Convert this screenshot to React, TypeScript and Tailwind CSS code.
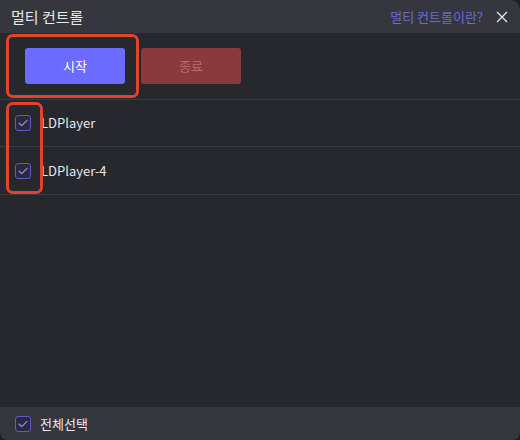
import React from "react";

const Check = ({ size = 16 }: { size?: number }) => (
  <div
    className="flex items-center justify-center rounded-[3px] border border-[#5b5bd0] bg-[#2a2a3a]"
    style={{ width: size, height: size }}
  >
    <svg width="10" height="8" viewBox="0 0 10 8" fill="none">
      <path d="M1 4.2 L3.8 6.6 L9 1.4" stroke="#8a8af0" strokeWidth="1.3" strokeLinecap="round" strokeLinejoin="round" />
    </svg>
  </div>
);

export default function App() {
  const font = { fontFamily: '"Noto Sans CJK KR", "Noto Sans", sans-serif' };
  return (
    <div className="w-[520px] h-[440px] bg-[#1f1f24]" style={font}>
      <div className="relative w-[520px] h-[440px] flex flex-col bg-[#27272e] rounded-tr-[10px] rounded-b-[8px] overflow-hidden">
        <div className="h-[33px] flex items-center justify-between bg-[#35363e] pl-[11px] pr-[12px]">
          <span className="text-[15px] text-[#e8e8ec] leading-none">멀티 컨트롤</span>
          <div className="flex items-center gap-[13px]">
            <span className="text-[13px] text-[#6a6ad8] leading-none">멀티 컨트롤이란?</span>
            <svg width="12" height="12" viewBox="0 0 12 12">
              <path d="M1 1 L11 11 M11 1 L1 11" stroke="#e8e8ec" strokeWidth="1.3" />
            </svg>
          </div>
        </div>
        <div className="h-[67px] flex items-center gap-[16px] pl-[25px] border-b border-[#3a3a42]">
          <div className="w-[100px] h-[36px] rounded-[3px] bg-[#6b6bff] flex items-center justify-center text-[13px] text-white">시작</div>
          <div className="w-[100px] h-[36px] rounded-[3px] bg-[#8a393d] flex items-center justify-center text-[13px] text-[#c06670]">종료</div>
        </div>
        <div className="h-[47px] flex items-center pl-[15px] border-b border-[#3a3a42]">
          <Check />
          <span className="ml-[10px] text-[13px] text-[#e8e8ec]">LDPlayer</span>
        </div>
        <div className="h-[48px] flex items-center pl-[15px] border-b border-[#3a3a42]">
          <Check />
          <span className="ml-[10px] text-[13px] text-[#e8e8ec]">LDPlayer-4</span>
        </div>
        <div className="flex-1" />
        <div className="h-[33px] flex items-center pl-[15px] bg-[#35363e]">
          <Check />
          <span className="ml-[9px] text-[13px] text-[#e8e8ec]">전체선택</span>
        </div>
        <div className="absolute left-[6px] top-[34px] w-[133px] h-[64px] border-[3px] border-[#e0452c] rounded-[7px]" />
        <div className="absolute left-[6px] top-[102px] w-[37px] h-[92px] border-[3px] border-[#e0452c] rounded-[7px]" />
      </div>
    </div>
  );
}
